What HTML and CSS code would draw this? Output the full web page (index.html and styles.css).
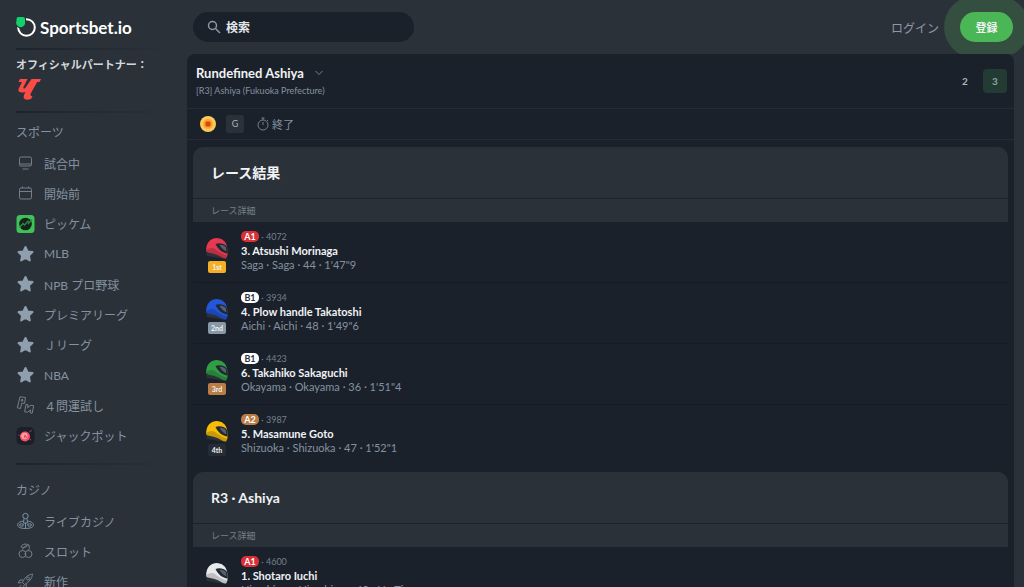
FILE: index.html
```html
<!DOCTYPE html>
<html lang="ja">
<head>
    <meta charset="UTF-8">
    <meta name="viewport" content="width=device-width, initial-scale=1.0">
    <title>Sportsbet.io</title>
    <link rel="stylesheet" href="styles.css">
</head>
<body>
    <svg class="sprite" aria-hidden="true">
        <symbol id="star" viewBox="0 0 18 18">
            <path d="M9 2l2.1 4.5 4.9.6-3.6 3.4.9 4.9L9 13l-4.300 2.400.9-4.900L2 7.100l4.900-.6z" fill="currentColor" stroke="currentColor" stroke-width="2" stroke-linejoin="round"/>
        </symbol>
        <symbol id="helmet" viewBox="0 0 24 24">
            <path d="M1 17l3-1 18 4-1 3-19-3z" fill="#2b3138"/>
            <path d="M1.500 11C2.500 5.500 6.500 2 11.500 2c5.500 0 9.500 3.500 10.500 8.500.6 3.500.8 7 .3 9.500l-1.300 2.500c-3-.2-5-1.500-7.500-3S5 17 1.500 16c-.5-1.500-.4-3.500 0-5z" fill="currentColor"/>
            <path d="M10.500 8c4-1.500 8.500-.5 11.300 2.500.7 2.500.9 4.500.8 7-5-.5-9.500-4-12.100-9.500z" fill="#222830"/>
            <path d="M14.500 8.800c3-.3 5 .8 6.300 2.500l.6 4c-2.800-1-5.200-3.200-6.900-6.500z" fill="#56616b"/>
            <path d="M1.500 13.500c3-1.500 6-2 8.500-.5 3.500 2.500 7 5.500 12.300 6.500l-1.300 3c-3-.2-5-1.500-7.500-3S5 17 1.500 16z" fill="#000" opacity=".18"/>
        </symbol>
    </svg>

    <aside class="sidebar">
        <a class="logo" href="#">
            <svg width="20" height="20" viewBox="0 0 20 20" aria-hidden="true">
                <circle cx="10.500" cy="10.500" r="8.300" fill="none" stroke="#fff" stroke-width="2"/>
                <path d="M0 0h10v4.500A5 5 0 0 1 0 8z" fill="#2b3139"/>
                <path d="M2.500 0H7a2 2 0 0 1 2 2v2.500A4.500 4.500 0 1 1 .5 4V2a2 2 0 0 1 2-2z" fill="#14d06a"/>
            </svg>
            <span>Sportsbet.io</span>
        </a>
        <hr>
        <div class="partner">
            <p>オフィシャルパートナー：</p>
            <svg width="26" height="22" viewBox="0 0 26 22" aria-hidden="true">
                <path d="M4 1h7.500L7.500 9c-.7 1.500.3 2 1.800 1L15.500 1H25l-1.500 3h-2.300L15 15c-1 2-.6 3 1.500 3.200L15 21c-5 1.500-8.500.5-7-4l1.500-3C4.500 15.500 1 14 3 10l3-6H2.500z" fill="#fa4b47"/>
            </svg>
        </div>
        <hr>
        <nav>
            <h2>スポーツ</h2>
            <ul class="menu sports">
                <li><a href="#"><svg viewBox="0 0 18 18" class="line"><path d="M4.500 3h9a1.500 1.500 0 0 1 1.500 1.500v6a1.500 1.500 0 0 1-1.500 1.500h-9A1.500 1.500 0 0 1 3 10.500v-6A1.500 1.500 0 0 1 4.500 3zM6 15h6M3 10h12"/></svg>試合中</a></li>
                <li><a href="#"><svg viewBox="0 0 18 18" class="line"><rect x="3" y="4" width="12" height="11" rx="1.500"/><path d="M3 7.500h12M6 2.500V4M12 2.500V4"/></svg>開始前</a></li>
                <li><a href="#"><svg viewBox="0 0 18 18"><rect width="18" height="18" rx="3.500" fill="#3fc257"/><circle cx="9" cy="9" r="6.300" fill="#14231c"/><path d="M3 12.500l3.500-4L8 10l3.500-4 .5 2.500L15.500 4.500" fill="none" stroke="#2f8a44" stroke-width="1.200"/></svg>ピッケム</a></li>
                <li><a href="#"><svg><use href="#star"/></svg>MLB</a></li>
                <li><a href="#"><svg><use href="#star"/></svg>NPB プロ野球</a></li>
                <li><a href="#"><svg><use href="#star"/></svg>プレミアリーグ</a></li>
                <li><a href="#"><svg><use href="#star"/></svg>Ｊリーグ</a></li>
                <li><a href="#"><svg><use href="#star"/></svg>NBA</a></li>
                <li><a href="#"><svg viewBox="0 0 18 18" class="line"><path d="M3.500.8l5.500.7-1 6-2.800-.3L4 12.500l-3.200-.7zM5 3.500l1.500.2-.3 1.500-1.500-.2zM9.500 8.500l2 .3-.3 3 3-2.500 3 .4-1.500 7.500-2-.3.4-3-3 2.300-3-.4z"/></svg>４問運試し</a></li>
                <li><a href="#"><svg viewBox="0 0 18 18"><rect width="18" height="18" rx="5" fill="#1b1f2a"/><circle cx="8.500" cy="9.500" r="5" fill="#f4516a"/><circle cx="8" cy="9" r="3.200" fill="#ff9c9f"/><path d="M7.500 8.500l3 2M9 8l-1 3M13 5l2-1.500M2 8l1 .5M13 12l1.500 1" stroke="#e43e58"/></svg>ジャックポット</a></li>
            </ul>
            <hr>
            <h2>カジノ</h2>
            <ul class="menu">
                <li><a href="#"><svg viewBox="0 0 18 18" class="line blue"><circle cx="9" cy="4" r="2.700"/><path d="M7.500 6.500L7 11h4l-.5-4.500M7 9c-3.500.5-6 2-6 4s3 3.500 8 3.500 8-1.500 8-3.500-2.500-3.500-6-4"/><ellipse cx="5" cy="13" rx="2" ry="1.200"/><ellipse cx="13" cy="13" rx="2" ry="1.200"/><path d="M9 11v5"/></svg>ライブカジノ</a></li>
                <li><a href="#"><svg viewBox="0 0 18 18" class="line"><circle cx="6" cy="12" r="3.500"/><circle cx="12" cy="12" r="3.500"/><path d="M6 8.500c0-3 3-5 6.500-5.500 1 3-.5 5-.5 5.500M12 3C9 1 5 2.500 4.500 5c2.500 1 4.500.5 6-1"/></svg>スロット</a></li>
                <li><a href="#"><svg viewBox="0 0 18 18" class="line"><path d="M6 10.500C8 5.500 11 3 16 2c-.5 5-3.500 8-8 10.500zM6.500 8H3.500L1.500 11 5 10.500M9.500 12l.5 2.500L7 17l.5-4M2 16l3-3"/><circle cx="11.500" cy="6.500" r="1.500"/></svg>新作</a></li>
            </ul>
        </nav>
    </aside>

    <div class="page">
        <header class="topbar">
            <div class="search">
                <svg width="14" height="14" viewBox="0 0 14 14" aria-hidden="true"><circle cx="5.500" cy="5.500" r="4" /><path d="M8.500 8.500L13 13"/></svg>
                <input type="text" placeholder="検索" aria-label="検索">
            </div>
            <a class="login" href="#">ログイン</a>
            <button class="register" type="button">登録</button>
        </header>

        <main>
            <div class="race-head">
                <div>
                    <button class="race-picker" type="button">Rundefined Ashiya
                        <svg width="8" height="6" viewBox="0 0 8 6" aria-hidden="true"><path d="M.5 1L4 4.500 7.500 1"/></svg>
                    </button>
                    <p>[R3] Ashiya (Fukuoka Prefecture)</p>
                </div>
                <div class="race-tabs">
                    <button type="button">2</button>
                    <button type="button" class="active">3</button>
                </div>
            </div>
            <div class="race-info">
                <svg width="16" height="16" viewBox="0 0 16 16" aria-hidden="true"><circle cx="8" cy="8" r="8" fill="#fbc95c"/><circle cx="8" cy="8" r="5" fill="#f9a52e"/><rect x="5.500" y="5.500" width="5" height="5" rx="1" fill="#d9480f"/></svg>
                <span class="grade">G</span>
                <span class="status">
                    <svg width="12" height="14" viewBox="0 0 12 14" aria-hidden="true"><circle cx="6" cy="8" r="5"/><path d="M4.500 1h3M6 1v2M6 5v3M10 3l1 1"/></svg>
                    終了
                </span>
            </div>

            <section class="card">
                <h3>レース結果</h3>
                <h4>レース詳細</h4>
                <ul class="racers">
                    <li>
                        <div class="place"><svg class="red"><use href="#helmet"/></svg><span class="first">1st</span></div>
                        <div class="racer">
                            <p class="number"><b class="a1">A1</b> · 4072</p>
                            <p class="name">3. Atsushi Morinaga</p>
                            <p class="detail">Saga · Saga · 44 · 1'47"9</p>
                        </div>
                    </li>
                    <li>
                        <div class="place"><svg class="navy"><use href="#helmet"/></svg><span class="second">2nd</span></div>
                        <div class="racer">
                            <p class="number"><b class="b1">B1</b> · 3934</p>
                            <p class="name">4. Plow handle Takatoshi</p>
                            <p class="detail">Aichi · Aichi · 48 · 1'49"6</p>
                        </div>
                    </li>
                    <li>
                        <div class="place"><svg class="green"><use href="#helmet"/></svg><span class="third">3rd</span></div>
                        <div class="racer">
                            <p class="number"><b class="b1">B1</b> · 4423</p>
                            <p class="name">6. Takahiko Sakaguchi</p>
                            <p class="detail">Okayama · Okayama · 36 · 1'51"4</p>
                        </div>
                    </li>
                    <li>
                        <div class="place"><svg class="yellow"><use href="#helmet"/></svg><span>4th</span></div>
                        <div class="racer">
                            <p class="number"><b class="a2">A2</b> · 3987</p>
                            <p class="name">5. Masamune Goto</p>
                            <p class="detail">Shizuoka · Shizuoka · 47 · 1'52"1</p>
                        </div>
                    </li>
                </ul>
            </section>

            <section class="card">
                <h3>R3 · Ashiya</h3>
                <h4>レース詳細</h4>
                <ul class="racers">
                    <li>
                        <div class="place"><svg class="white"><use href="#helmet"/></svg></div>
                        <div class="racer">
                            <p class="number"><b class="a1">A1</b> · 4600</p>
                            <p class="name">1. Shotaro Iuchi</p>
                            <p class="detail">Hiroshima · Hiroshima · 40 · No Tie</p>
                        </div>
                    </li>
                </ul>
            </section>
        </main>
    </div>
</body>
</html>
```
FILE: styles.css
```css
* {
    box-sizing: border-box;
}
body {
    display: flex;
    height: 100vh;
    margin: 0;
    overflow: hidden;
    background: #2b3139;
    color: #f0f2f4;
    font-family: Lato, "Noto Sans CJK JP", sans-serif;
    font-size: 12px;
}
h2, h3, h4, p, ul {
    margin: 0;
    padding: 0;
}
ul {
    list-style: none;
}
a {
    color: inherit;
    text-decoration: none;
}
button {
    border: 0;
    padding: 0;
    background: none;
    color: inherit;
    font: inherit;
}
.sprite {
    position: absolute;
    width: 0;
    height: 0;
}

/* sidebar */
.sidebar {
    flex: 0 0 187px;
    padding: 0 16px;
    color: #8591a0;
}
.logo {
    display: flex;
    align-items: center;
    gap: 4px;
    height: 48px;
    padding-top: 6px;
    color: #fff;
    font-size: 17px;
    font-weight: bold;
}
hr {
    height: 2px;
    margin: 0;
    border: 0;
    background: linear-gradient(90deg, #1e242d, #2b3139);
}
.partner {
    height: 61px;
    padding-top: 6px;
    color: #d3d8dd;
    font-size: 11px;
    font-weight: bold;
    line-height: 18px;
}
.partner svg {
    display: block;
    margin-top: 4px;
}
nav h2 {
    padding-top: 5px;
    font-size: 12px;
    font-weight: normal;
    line-height: 30px;
}
.menu a {
    display: flex;
    align-items: center;
    gap: 9px;
    height: 30px;
}
.menu svg {
    flex: none;
    width: 19px;
    height: 18px;
    color: #8f9fae;
}
.menu .line {
    fill: none;
    stroke: #74808c;
    stroke-width: 1;
}
.menu .blue {
    stroke: #7b92a6;
}
.sports {
    display: grid;
    height: 303px;
    margin-bottom: 12px;
}
nav hr + h2 {
    padding-top: 11px;
}

/* top bar */
.page {
    display: flex;
    flex: 1;
    flex-direction: column;
    min-width: 0;
}
.topbar {
    display: flex;
    flex: 0 0 54px;
    align-items: center;
    padding: 0 11px 0 6px;
    overflow: hidden;
}
.search {
    display: flex;
    align-items: center;
    gap: 5px;
    width: 221px;
    height: 30px;
    margin-right: auto;
    padding: 0 14px;
    border-radius: 15px;
    background: #1a212b;
}
.search svg {
    flex: none;
    fill: none;
    stroke: #8d99a6;
    stroke-width: 1.5;
}
.search input {
    width: 100%;
    border: 0;
    padding: 0;
    background: none;
    outline: none;
    font: bold 12px Lato, "Noto Sans CJK JP", sans-serif;
}
.search input::placeholder {
    color: #e3e6e9;
}
.login {
    margin-right: 21px;
    color: #8d99a6;
}
.register {
    width: 53px;
    height: 30px;
    border-radius: 15px;
    background: #4ab656;
    box-shadow: 0 0 0 16px #344f40;
    font-size: 11px;
    font-weight: bold;
}

/* race */
main {
    flex: 1;
    min-height: 0;
    margin-right: 10px;
    border-radius: 8px 8px 0 0;
    background: #1a212b;
}
.race-head {
    display: flex;
    align-items: center;
    justify-content: space-between;
    height: 55px;
    padding: 0 7px 0 9px;
    border-bottom: 1px solid #252c36;
}
.race-picker {
    display: flex;
    align-items: center;
    gap: 11px;
    font-size: 13px;
    font-weight: bold;
    line-height: 20px;
}
.race-picker svg {
    fill: none;
    stroke: #74808c;
}
.race-head p {
    color: #8591a0;
    font-size: 9px;
    line-height: 16px;
}
.race-tabs {
    display: flex;
    gap: 6px;
}
.race-tabs button {
    width: 24px;
    height: 24px;
    border-radius: 4px;
    color: #aab4be;
    font-size: 10px;
    font-weight: bold;
}
.race-tabs .active {
    background: #233c33;
    color: #8fa69c;
}
.race-info {
    display: flex;
    align-items: center;
    gap: 10px;
    height: 31px;
    margin-bottom: 7px;
    padding: 0 13px;
    border-bottom: 1px solid #252c36;
}
.grade {
    width: 18px;
    border-radius: 2px;
    background: #2b3139;
    color: #aab4be;
    font-size: 9px;
    line-height: 18px;
    text-align: center;
}
.status {
    display: flex;
    align-items: center;
    gap: 3px;
    margin-left: 3px;
    color: #8591a0;
    font-size: 11px;
}
.status svg {
    fill: none;
    stroke: #74808c;
}

/* cards */
.card {
    margin: 0 6px 6px;
}
.card h3 {
    height: 52px;
    padding: 0 18px;
    border-bottom: 1px solid #1c232c;
    border-radius: 10px 10px 0 0;
    background: #2b3139;
    font-size: 14px;
    font-weight: bold;
    line-height: 51px;
}
.card h4 {
    padding: 0 18px;
    background: #2b3139;
    color: #74808c;
    font-size: 9px;
    font-weight: normal;
    line-height: 23px;
}
.racers li {
    display: flex;
    gap: 12px;
    height: 61px;
    padding: 8px 12px 0;
    border-bottom: 1px solid #151b25;
}
.racers li:last-child {
    border-bottom: 0;
}
.place {
    display: flex;
    flex-direction: column;
    align-items: center;
    width: 24px;
    padding-top: 6px;
}
.place svg {
    width: 24px;
    height: 24px;
}
.place span {
    width: 18px;
    margin-top: 1px;
    border-radius: 2px;
    background: #252c36;
    font-size: 7px;
    font-weight: bold;
    line-height: 12px;
    text-align: center;
}
.place .first {
    background: #f6af25;
}
.place .second {
    background: #8798a6;
}
.place .third {
    background: #b97d45;
}
.red {
    color: #e63950;
}
.navy {
    color: #2456dc;
}
.green {
    color: #2f9e44;
}
.yellow {
    color: #f5bd08;
}
.white {
    color: #e8e9ea;
}
.number {
    color: #74808c;
    font-size: 9px;
    line-height: 14px;
}
.number b {
    display: inline-block;
    width: 18px;
    border-radius: 5px;
    color: #fff;
    line-height: 11px;
    text-align: center;
}
.number .a1 {
    background: #d92f35;
}
.number .a2 {
    background: #b97d45;
}
.number .b1 {
    background: #fff;
    color: #2b3139;
}
.name {
    font-size: 11px;
    font-weight: bold;
    line-height: 14px;
}
.detail {
    color: #8591a0;
    font-size: 11px;
    line-height: 14px;
}
```
